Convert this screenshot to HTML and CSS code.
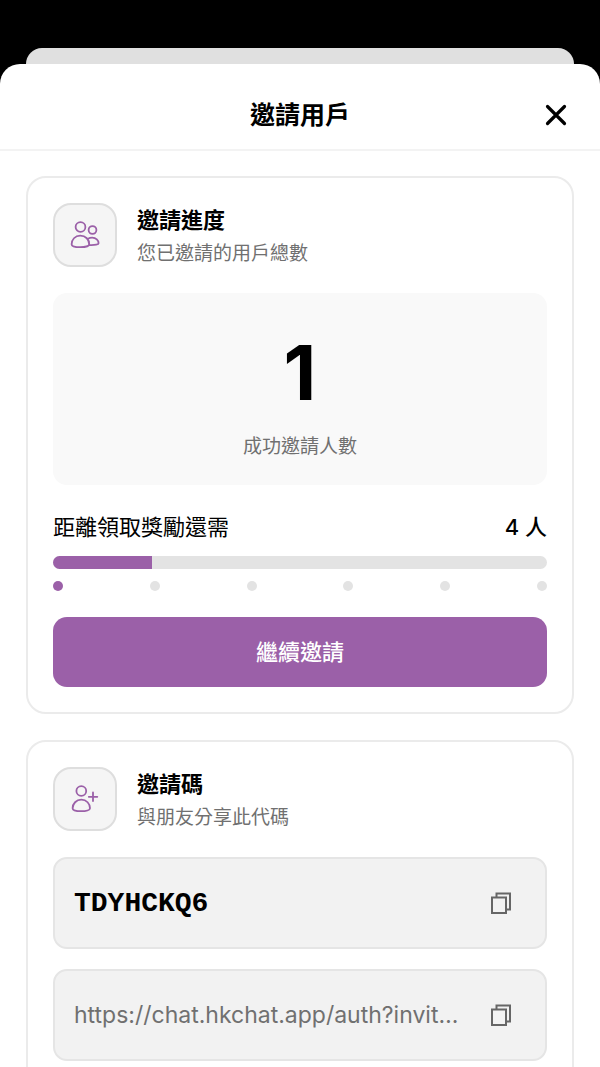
FILE: index.html
```html
<!DOCTYPE html>
<html lang="zh-Hant">
<head>
<meta charset="utf-8">
<meta name="viewport" content="width=device-width, initial-scale=1">
<title>邀請用戶</title>
<link rel="stylesheet" href="styles.css">
</head>
<body>
<div class="backdrop"></div>
<main class="sheet">
  <header class="sheet-header">
    <h1 class="sheet-title">邀請用戶</h1>
    <button class="close" type="button" aria-label="關閉">
      <svg width="22" height="22" viewBox="0 0 22 22" fill="none" stroke="currentColor" stroke-width="3.2" stroke-linecap="round"><path d="M2.5 2.5 19.5 19.5M19.5 2.5 2.5 19.5"/></svg>
    </button>
  </header>
  <div class="content">
    <section class="card">
      <div class="card-head">
        <div class="icon-box">
          <svg width="32" height="32" viewBox="0 0 32 32" fill="none" stroke="currentColor" stroke-width="1.8" stroke-linejoin="round" stroke-linecap="round"><circle cx="11.5" cy="8" r="4.9"/><circle cx="23.5" cy="11" r="3.9"/><path d="M11.2 16.6C6 16.6 2.6 20.8 2.6 25.2C2.6 27 6.5 28.2 11.2 28.2S20.2 27 20.2 25.2C20.2 20.8 16.8 16.6 11.2 16.6ZM18.6 20C20 19.2 21.5 18.7 23.2 18.7C27 18.7 29.6 21.5 29.6 24.3C29.6 25.5 26.5 26.2 20.2 26"/></svg>
        </div>
        <div class="card-text">
          <h2 class="card-title">邀請進度</h2>
          <p class="card-subtitle">您已邀請的用戶總數</p>
        </div>
      </div>
      <div class="stat">
        <strong class="stat-value">1</strong>
        <span class="stat-label">成功邀請人數</span>
      </div>
      <div class="goal">
        <span>距離領取獎勵還需</span>
        <strong class="goal-count">4 人</strong>
      </div>
      <div class="track" role="progressbar" aria-label="邀請進度" aria-valuemin="0" aria-valuemax="5" aria-valuenow="1">
        <div class="track-fill" style="width: 20%"></div>
      </div>
      <div class="steps">
        <span class="step step-done"></span><span class="step"></span><span class="step"></span><span class="step"></span><span class="step"></span><span class="step"></span>
      </div>
      <button class="primary" type="button">繼續邀請</button>
    </section>
    <section class="card">
      <div class="card-head">
        <div class="icon-box">
          <svg width="32" height="32" viewBox="0 0 32 32" fill="none" stroke="currentColor" stroke-width="1.8" stroke-linejoin="round" stroke-linecap="round"><circle cx="12.3" cy="8" r="4.9"/><path d="M12.3 16.6C7.3 16.6 3.6 20.8 3.6 25.2C3.6 27 7.5 28.2 12.3 28.2S21 27 21 25.2C21 20.8 17.5 16.6 12.3 16.6ZM24 9.5V18M19.8 13.8H28.3"/></svg>
        </div>
        <div class="card-text">
          <h2 class="card-title">邀請碼</h2>
          <p class="card-subtitle">與朋友分享此代碼</p>
        </div>
      </div>
      <div class="field">
        <span class="code">TDYHCKQ6</span>
        <button class="copy" type="button" aria-label="複製邀請碼">
          <svg width="22" height="24" viewBox="0 0 22 24" fill="none" stroke="currentColor" stroke-width="2"><path d="M6.5 6.500V2.500H20V18.500H16"/><rect x="2" y="6.500" width="14" height="15.500"/></svg>
        </button>
      </div>
      <div class="field">
        <span class="link">https://chat.hkchat.app/auth?invit…</span>
        <button class="copy" type="button" aria-label="複製連結">
          <svg width="22" height="24" viewBox="0 0 22 24" fill="none" stroke="currentColor" stroke-width="2"><path d="M6.5 6.500V2.500H20V18.500H16"/><rect x="2" y="6.500" width="14" height="15.500"/></svg>
        </button>
      </div>
    </section>
  </div>
</main>
</body>
</html>
```
FILE: styles.css
```css
* { box-sizing: border-box; }

body {
  margin: 0;
  height: 100vh;
  padding-top: 48px;
  display: flex;
  flex-direction: column;
  overflow: hidden;
  background: #000;
  color: #000;
  font-family: Inter, "Noto Sans CJK TC", sans-serif;
}

h1, h2, p { margin: 0; }

button {
  border: 0;
  padding: 0;
  background: none;
  font-family: inherit;
  cursor: pointer;
}

svg { display: block; }

.backdrop {
  flex: none;
  height: 16px;
  margin: 0 26px;
  border-radius: 16px 16px 0 0;
  background: #e0e0e0;
}

.sheet {
  flex: 1;
  min-height: 0;
  display: flex;
  flex-direction: column;
  border-radius: 20px 20px 0 0;
  background: #fff;
  overflow: hidden;
}

.sheet-header {
  flex: none;
  display: grid;
  grid-template-columns: 1fr auto 1fr;
  align-items: center;
  height: 87px;
  padding: 16px 33px 0;
  border-bottom: 2px solid #f3f3f3;
}

.sheet-title {
  grid-column: 2;
  font-size: 25px;
  line-height: 36px;
  font-weight: 700;
}

.close {
  justify-self: end;
  color: #000;
}

.content {
  flex: 1;
  min-height: 0;
  display: flex;
  flex-direction: column;
  gap: 26px;
  padding: 25px 26px;
  overflow-y: auto;
  scrollbar-width: none;
}

.card {
  flex: none;
  padding: 25px;
  border: 2px solid #ebebeb;
  border-radius: 20px;
}

.card-head {
  display: flex;
  gap: 20px;
  margin-bottom: 22px;
}

.icon-box {
  flex: none;
  display: grid;
  place-items: center;
  width: 64px;
  height: 64px;
  border: 2px solid #dedede;
  border-radius: 18px;
  background: #f5f5f5;
  color: #9b60a8;
}

.card-title {
  font-size: 22px;
  line-height: 34px;
  font-weight: 700;
}

.card-subtitle {
  font-size: 19px;
  line-height: 34px;
  color: #707070;
}

.stat {
  display: flex;
  flex-direction: column;
  align-items: center;
  gap: 16px;
  padding: 36px 20px 22px;
  border-radius: 14px;
  background: #f9f9f9;
}

.stat-value {
  font-size: 76px;
  line-height: 86px;
  font-weight: 700;
}

.stat-label {
  font-size: 19px;
  line-height: 32px;
  color: #707070;
}

.goal {
  display: flex;
  justify-content: space-between;
  margin: 26px 0 13px;
  font-size: 22px;
  line-height: 32px;
}

.goal-count { font-weight: 500; }

.track {
  height: 13px;
  border-radius: 7px;
  background: #e3e3e3;
  overflow: hidden;
}

.track-fill {
  height: 100%;
  background: #9b60a8;
}

.steps {
  display: flex;
  justify-content: space-between;
  margin: 12px 0 26px;
}

.step {
  width: 10px;
  height: 10px;
  border-radius: 50%;
  background: #e3e3e3;
}

.step-done { background: #9b60a8; }

.primary {
  display: block;
  width: 100%;
  height: 70px;
  padding-bottom: 4px;
  border-radius: 14px;
  background: #9b60a8;
  color: #fff;
  font-size: 22px;
  font-weight: 500;
}

.field {
  display: flex;
  align-items: center;
  justify-content: space-between;
  height: 92px;
  padding: 0 33px 0 19px;
  border: 2px solid #e5e5e5;
  border-radius: 14px;
  background: #f2f2f2;
}

.field + .field { margin-top: 20px; }

.code {
  font-family: "Liberation Mono", monospace;
  font-size: 28px;
  font-weight: 700;
}

.link {
  min-width: 0;
  margin-right: 16px;
  overflow: hidden;
  text-overflow: ellipsis;
  white-space: nowrap;
  font-size: 23px;
  line-height: 32px;
  color: #707070;
}

.copy {
  flex: none;
  color: #666;
}
```
